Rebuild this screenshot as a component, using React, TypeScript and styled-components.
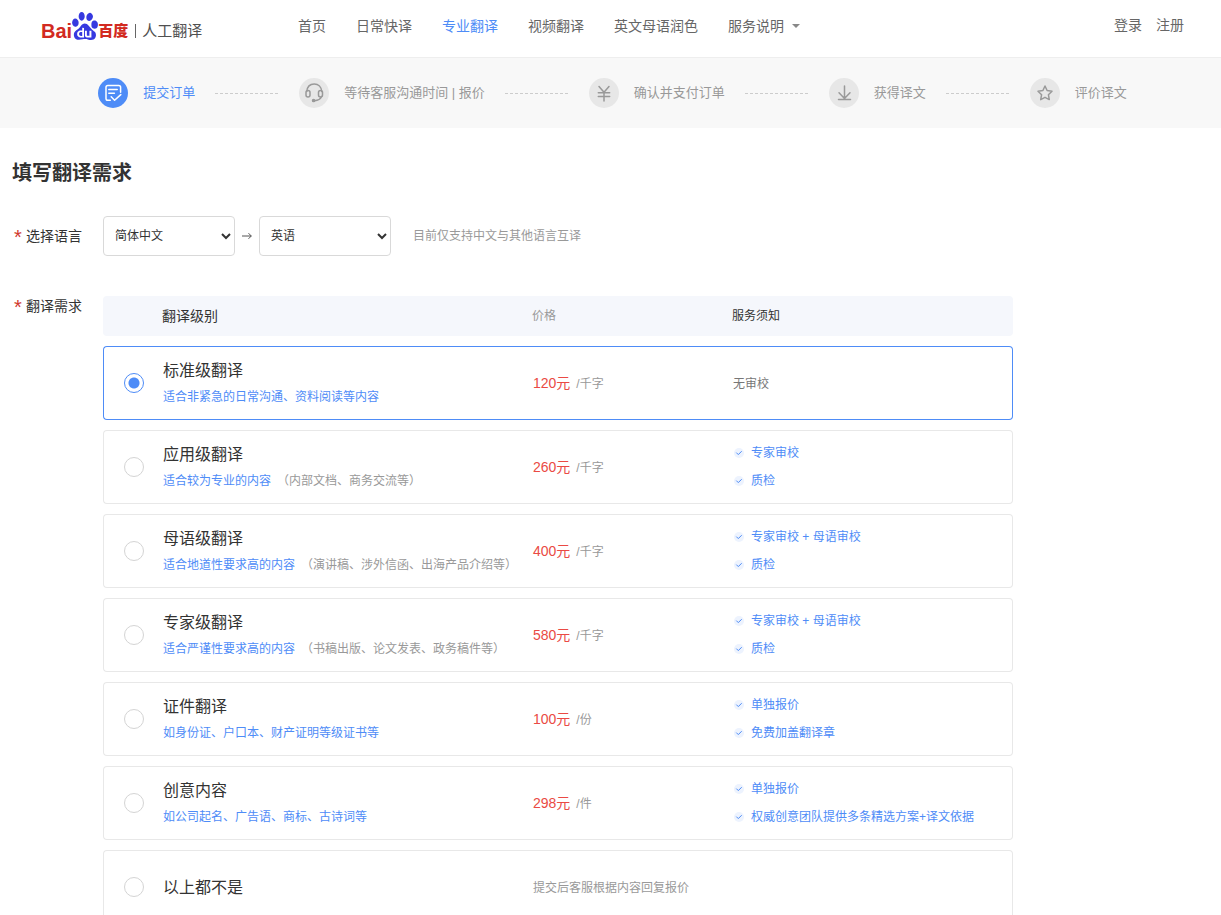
import React, { useState } from "react";
import styled, { createGlobalStyle } from "styled-components";
import { SiBaidu } from "react-icons/si";

const blue = "#4e8cf7";

const GlobalStyle = createGlobalStyle`
  * { box-sizing: border-box; }
  body {
    margin: 0;
    background: #fff;
    color: #333;
    font-family: "Liberation Sans", "Noto Sans CJK SC", sans-serif;
    font-size: 14px;
    line-height: 20px;
  }
  a { color: inherit; text-decoration: none; }
`;

const Header = styled.header`
  display: flex;
  align-items: flex-start;
  height: 58px;
  padding: 0 37px 0 41px;
  border-bottom: 1px solid #eee;
`;

const Logo = styled.a`
  display: flex;
  align-items: center;
  width: 257px;
  height: 40px;
  padding-top: 12px;
  flex: none;
`;

const LogoWord = styled.span<{ $latin?: boolean }>`
  color: #d22a21;
  font-weight: 900;
  font-size: ${(p) => (p.$latin ? 20 : 15)}px;
  line-height: 36px;
  padding-top: 10px;
`;

const Paw = styled(SiBaidu)`
  flex: none;
  width: 28px;
  height: 28px;
  margin: 0 -1px 1px;
  color: #3639e0;
`;

const LogoProduct = styled.span`
  margin-top: 9px;
  margin-left: 7px;
  padding-left: 6px;
  border-left: 1px solid #666;
  color: #505050;
  font-size: 15px;
  line-height: 14px;
`;

const Nav = styled.nav`
  display: flex;
  gap: 30px;
  flex: 1;
  padding-top: 16px;
`;

const NavLink = styled.a<{ $active?: boolean }>`
  display: flex;
  align-items: center;
  color: ${(p) => (p.$active ? blue : "#666")};
`;

const Caret = styled.span`
  margin-left: 8px;
  border: 4px solid transparent;
  border-top-color: #888;
  border-bottom: 0;
`;

const Account = styled.div`
  display: flex;
  gap: 14px;
  padding-top: 15px;
  color: #666;
`;

const Steps = styled.ol`
  display: flex;
  align-items: center;
  justify-content: center;
  height: 70px;
  margin: 0;
  padding: 0 0 0 4px;
  list-style: none;
  background: #f8f8f8;
`;

const Step = styled.li<{ $active?: boolean }>`
  display: flex;
  align-items: center;
  white-space: nowrap;
  font-size: 13px;
  color: ${(p) => (p.$active ? blue : "#999")};

  &:not(:last-child)::after {
    content: "";
    width: 65px;
    height: 1px;
    margin: 0 19px 0 20px;
    background: repeating-linear-gradient(90deg, #ccc 0 3px, transparent 3px 5px);
  }
`;

const StepText = styled.span`
  padding-bottom: 1px;
`;

const StepIcon = styled.span<{ $active?: boolean }>`
  display: flex;
  width: 30px;
  height: 30px;
  margin-right: 15px;
  border-radius: 50%;
  color: ${(p) => (p.$active ? "#fff" : "#999")};
  background: ${(p) => (p.$active ? blue : "#e7e7e7")};

  svg {
    fill: none;
    stroke: currentColor;
    stroke-width: 1.5;
    stroke-linecap: round;
    stroke-linejoin: round;
  }
`;

const Main = styled.main`
  padding: 30px 12px 0;
`;

const Title = styled.h1`
  margin: 0 0 28px;
  font-size: 20px;
  line-height: 30px;
`;

const Field = styled.div`
  display: flex;
  align-items: flex-start;
`;

const FieldLabel = styled.span`
  display: flex;
  flex: none;
  width: 91px;
  padding: 10px 0 10px 2px;
  gap: 4px;

  &::before {
    content: "*";
    width: 8px;
    color: #d0382e;
    font-size: 20px;
    line-height: 22px;
    height: 20px;
  }
`;

const Languages = styled.div`
  display: flex;
  align-items: center;
  margin-bottom: 30px;
`;

const LanguageSelect = styled.select`
  width: 132px;
  height: 40px;
  padding: 0 8px 0 7px;
  border: 1px solid #d9d9d9;
  border-radius: 4px;
  background: #fff;
  color: #333;
  font-family: inherit;
  font-size: 12px;
`;

const Arrow = styled.svg`
  width: 10px;
  height: 8px;
  margin: 0 7px;
  fill: none;
  stroke: #555;
`;

const Hint = styled.span`
  margin-left: 22px;
  color: #999;
  font-size: 12px;
`;

const LevelTable = styled.table`
  width: 100%;
  max-width: 910px;
  table-layout: fixed;
  border-collapse: separate;
  border-spacing: 0 10px;
`;

const HeadCell = styled.th<{ $width?: number; $minor?: boolean; $muted?: boolean }>`
  width: ${(p) => (p.$width ? `${p.$width}px` : "auto")};
  height: 40px;
  padding: 0;
  background: #f5f7fc;
  text-align: left;
  font-weight: 400;
  font-size: ${(p) => (p.$minor ? 12 : 14)}px;
  color: ${(p) => (p.$muted ? "#999" : "#333")};

  &:first-child { border-radius: 4px 0 0 4px; padding-left: 59px; }
  &:last-child { border-radius: 0 4px 4px 0; }
`;

const LevelRow = styled.tr<{ $selected: boolean }>`
  td {
    height: 74px;
    padding: 0 0 0 1px;
    border: solid ${(p) => (p.$selected ? blue : "#e8e8e8")};
    border-width: 1px 0;
  }
  td:first-child {
    border-left-width: 1px;
    border-radius: 4px 0 0 4px;
    padding-left: 20px;
  }
  td:last-child {
    border-right-width: 1px;
    border-radius: 0 4px 4px 0;
  }
`;

const Choice = styled.label`
  display: flex;
  align-items: center;
  gap: 19px;
  white-space: nowrap;
  cursor: pointer;
`;

const ChoiceText = styled.span`
  padding-top: 2px;
`;

const Radio = styled.input`
  appearance: none;
  flex: none;
  width: 20px;
  height: 20px;
  margin: 0;
  border: 1px solid #d4d4d4;
  border-radius: 50%;
  background: #fff;

  &:checked {
    border-color: ${blue};
    background: radial-gradient(circle, ${blue} 5px, #fff 6px);
  }
`;

const Name = styled.span`
  display: block;
  font-size: 16px;
  line-height: 26px;
`;

const Desc = styled.span`
  display: block;
  font-size: 12px;
  line-height: 26px;
  color: ${blue};
`;

const Example = styled.span`
  margin-left: 6px;
  color: #999;
`;

const Price = styled.span`
  margin-right: 6px;
  color: #ea4a44;
`;

const Small = styled.span<{ $dark?: boolean }>`
  font-size: 12px;
  color: ${(p) => (p.$dark ? "#777" : "#999")};
`;

const Services = styled.ul`
  margin: 0;
  padding: 0;
  list-style: none;
  font-size: 12px;
  line-height: 28px;
  color: ${blue};
  white-space: nowrap;
`;

const Service = styled.li`
  display: flex;
  align-items: center;
  gap: 7px;
  padding-left: 1px;
`;

const Tick = () => (
  <svg width="10" height="10" viewBox="0 0 10 10" fill="none" aria-hidden="true">
    <circle cx="5" cy="5" r="5" fill="#edf3fe" />
    <path d="M2.3 4.6 4.3 6.6 7.7 3.2" stroke={blue} strokeWidth="1" />
  </svg>
);

const steps = [
  {
    text: "提交订单",
    icon: (
      <>
        <path d="M12.3 22.2H9.8A1.8 1.8 0 0 1 8 20.4V9.3a1.8 1.8 0 0 1 1.8-1.8h11a1.8 1.8 0 0 1 1.8 1.8v5" />
        <path d="M10.8 11.5h8.4M10.8 15.2h5.6" />
        <path d="m13.2 18.7 3.4 3.5 6.2-5.6" />
      </>
    ),
  },
  {
    text: "等待客服沟通时间 | 报价",
    icon: (
      <>
        <path d="M7.8 13.5C8.2 9 11 6 15.2 6s7.2 3 7.5 7.5" />
        <rect x="7" y="12.5" width="4" height="6.5" rx="2" />
        <rect x="19.5" y="12.5" width="4" height="6.5" rx="2" />
        <path d="M22.5 18.5c-.9 2.4-3.6 4-7 4.2" />
        <circle cx="14.6" cy="22.5" r="1.1" fill="currentColor" />
      </>
    ),
  },
  {
    text: "确认并支付订单",
    icon: <path d="m10 8.5 5 5.8 5-5.8M9.3 14.8h11.4M9.3 18.6h11.4M15 14.8V23" />,
  },
  { text: "获得译文", icon: <path d="M15.5 8v13M10 14.8l5.5 5.8 5.5-5.8M9.5 21.6h12" /> },
  {
    text: "评价译文",
    icon: <path d="m15 8 2.1 4.5 4.9.7-3.6 3.5.9 4.9-4.3-2.3-4.3 2.3.9-4.9L8 13.2l4.9-.7Z" />,
  },
];

const navItems = ["首页", "日常快译", "专业翻译", "视频翻译", "英文母语润色"];

type Level = {
  name: string;
  desc?: string;
  example?: string;
  price?: string;
  unit?: string;
  services?: string[];
};

const levels: Level[] = [
  { name: "标准级翻译", desc: "适合非紧急的日常沟通、资料阅读等内容", price: "120元", unit: "/千字" },
  { name: "应用级翻译", desc: "适合较为专业的内容", example: "（内部文档、商务交流等）", price: "260元", unit: "/千字", services: ["专家审校", "质检"] },
  { name: "母语级翻译", desc: "适合地道性要求高的内容", example: "（演讲稿、涉外信函、出海产品介绍等）", price: "400元", unit: "/千字", services: ["专家审校 + 母语审校", "质检"] },
  { name: "专家级翻译", desc: "适合严谨性要求高的内容", example: "（书稿出版、论文发表、政务稿件等）", price: "580元", unit: "/千字", services: ["专家审校 + 母语审校", "质检"] },
  { name: "证件翻译", desc: "如身份证、户口本、财产证明等级证书等", price: "100元", unit: "/份", services: ["单独报价", "免费加盖翻译章"] },
  { name: "创意内容", desc: "如公司起名、广告语、商标、古诗词等", price: "298元", unit: "/件", services: ["单独报价", "权威创意团队提供多条精选方案+译文依据"] },
  { name: "以上都不是" },
];

export default function App() {
  const [selected, setSelected] = useState(0);

  return (
    <>
      <GlobalStyle />
      <Header>
        <Logo href="#">
          <LogoWord $latin>Bai</LogoWord>
          <Paw />
          <LogoWord>百度</LogoWord>
          <LogoProduct>人工翻译</LogoProduct>
        </Logo>
        <Nav>
          {navItems.map((item) => (
            <NavLink key={item} href="#" $active={item === "专业翻译"}>{item}</NavLink>
          ))}
          <NavLink href="#">服务说明<Caret /></NavLink>
        </Nav>
        <Account>
          <a href="#">登录</a>
          <a href="#">注册</a>
        </Account>
      </Header>

      <Steps>
        {steps.map((step, i) => (
          <Step key={step.text} $active={i === 0}>
            <StepIcon $active={i === 0}>
              <svg width="30" height="30" viewBox="0 0 30 30" aria-hidden="true">{step.icon}</svg>
            </StepIcon>
            <StepText>{step.text}</StepText>
          </Step>
        ))}
      </Steps>

      <Main>
        <Title>填写翻译需求</Title>
        <Field>
          <FieldLabel as="label" htmlFor="source">选择语言</FieldLabel>
          <Languages>
            <LanguageSelect id="source" defaultValue="简体中文">
              <option>简体中文</option>
              <option>英语</option>
            </LanguageSelect>
            <Arrow viewBox="0 0 10 8" aria-hidden="true">
              <path d="M0 4h9.3M6.5 1.2 9.3 4 6.5 6.8" />
            </Arrow>
            <LanguageSelect aria-label="目标语言" defaultValue="英语">
              <option>英语</option>
              <option>简体中文</option>
            </LanguageSelect>
            <Hint>目前仅支持中文与其他语言互译</Hint>
          </Languages>
        </Field>

        <Field role="radiogroup" aria-labelledby="level-label">
          <FieldLabel id="level-label">翻译需求</FieldLabel>
          <LevelTable>
            <thead>
              <tr>
                <HeadCell $width={429}>翻译级别</HeadCell>
                <HeadCell $width={200} $minor $muted>价格</HeadCell>
                <HeadCell $minor>服务须知</HeadCell>
              </tr>
            </thead>
            <tbody>
              {levels.map((level, i) => (
                <LevelRow key={level.name} $selected={i === selected}>
                  <td>
                    <Choice>
                      <Radio type="radio" name="level" checked={i === selected} onChange={() => setSelected(i)} />
                      <ChoiceText>
                        <Name>{level.name}</Name>
                        {level.desc && (
                          <Desc>
                            {level.desc}
                            {level.example && <Example>{level.example}</Example>}
                          </Desc>
                        )}
                      </ChoiceText>
                    </Choice>
                  </td>
                  {level.price ? (
                    <>
                      <td>
                        <Price>{level.price}</Price>
                        <Small>{level.unit}</Small>
                      </td>
                      <td>
                        {level.services ? (
                          <Services>
                            {level.services.map((service) => (
                              <Service key={service}><Tick />{service}</Service>
                            ))}
                          </Services>
                        ) : (
                          <Small $dark>无审校</Small>
                        )}
                      </td>
                    </>
                  ) : (
                    <td colSpan={2}><Small>提交后客服根据内容回复报价</Small></td>
                  )}
                </LevelRow>
              ))}
            </tbody>
          </LevelTable>
        </Field>
      </Main>
    </>
  );
}
